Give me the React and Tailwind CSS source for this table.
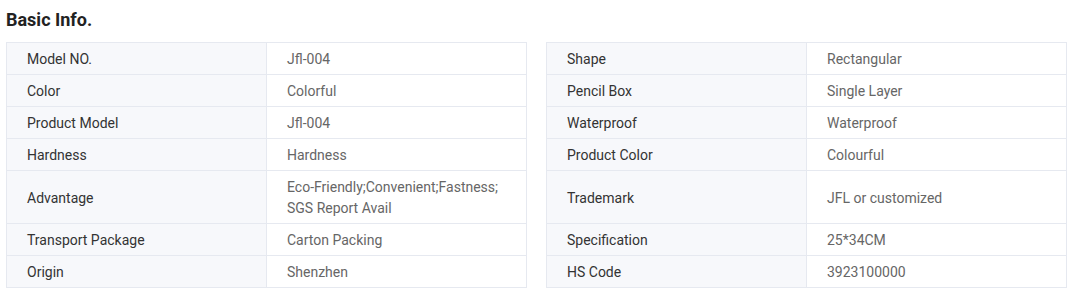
const ROWS = [
  ["Model NO.", "Jfl-004", "Shape", "Rectangular"],
  ["Color", "Colorful", "Pencil Box", "Single Layer"],
  ["Product Model", "Jfl-004", "Waterproof", "Waterproof"],
  ["Hardness", "Hardness", "Product Color", "Colourful"],
  ["Advantage", "Eco-Friendly;Convenient;Fastness; SGS Report Avail", "Trademark", "JFL or customized"],
  ["Transport Package", "Carton Packing", "Specification", "25*34CM"],
  ["Origin", "Shenzhen", "HS Code", "3923100000"],
];

function Label({ first, top, children }) {
  return (
    <div className={`flex items-center bg-[#f7f8fb] border-r border-b border-[#e6e9f0] px-5 pt-[6px] pb-[4px] text-[#333] ${first ? "border-l" : ""} ${top ? "border-t" : ""}`}>
      {children}
    </div>
  );
}

function Value({ top, children }) {
  return (
    <div className={`flex items-center border-r border-b border-[#e6e9f0] pl-5 pr-4 pt-[6px] pb-[4px] text-[#666] ${top ? "border-t" : ""}`}>
      {children}
    </div>
  );
}

export default function App() {
  return (
    <div className="bg-white w-[1080px] h-[303px] font-['Roboto',_'Liberation_Sans',_sans-serif] text-[14px] leading-[21px]">
      <h2 className="pl-[6px] pt-2 pb-[10px] text-[18px] leading-6 font-bold text-[#222]">Basic Info.</h2>
      <div className="ml-[6px] grid grid-cols-[261px_260px_19px_261px_260px]">
        {ROWS.map(([k1, v1, k2, v2], i) => (
          <div key={k1} className="contents">
            <Label first top={i === 0}>{k1}</Label>
            <Value top={i === 0}>{v1}</Value>
            <div />
            <Label first top={i === 0}>{k2}</Label>
            <Value top={i === 0}>{v2}</Value>
          </div>
        ))}
      </div>
    </div>
  );
}
